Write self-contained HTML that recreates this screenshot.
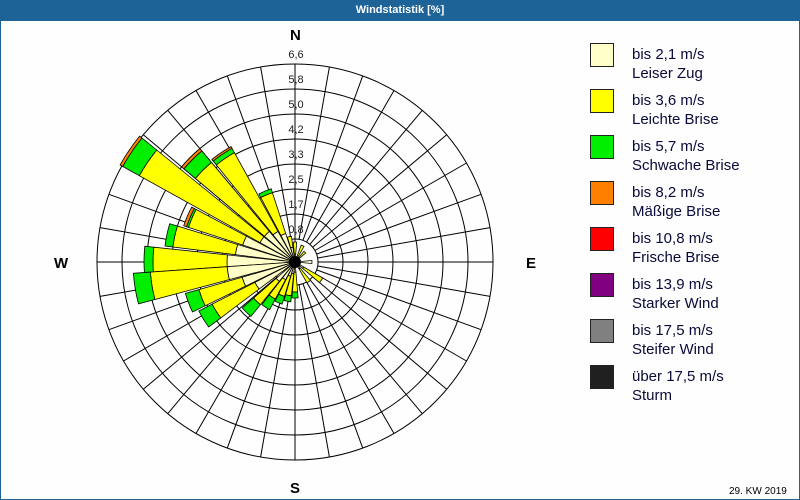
<!DOCTYPE html>
<html><head><meta charset="utf-8"><style>
body{margin:0;width:800px;height:500px;overflow:hidden;background:#fff;font-family:"Liberation Sans","DejaVu Sans",sans-serif}
#f{position:absolute;left:0;top:0;width:798px;height:498px;border:1px solid #1d6397;background:#fdfefd}
#h{position:absolute;left:0;top:0;width:800px;height:21px;background:#1d6397;color:#fff;font-size:11px;font-weight:bold;text-align:center;line-height:21px}
.lg{position:absolute;left:590px;width:22px;height:22px;border:1px solid #222}
.lt{position:absolute;left:632px;font-size:15px;line-height:19px;color:#0a0a3a}
.d{position:absolute;font-weight:bold;font-size:15px;color:#000}
</style></head><body>
<div id="f"></div>
<div id="h">Windstatistik [%]</div>
<svg id="s" width="800" height="500" style="position:absolute;left:0;top:0"></svg>
<div class="d" style="left:290px;top:27px">N</div>
<div class="d" style="left:526px;top:255px">E</div>
<div class="d" style="left:54px;top:255px">W</div>
<div class="d" style="left:290px;top:480px">S</div>
<div class="lg" style="top:43px;background:#ffffc8"></div><div class="lt" style="top:45px">bis 2,1 m/s<br>Leiser Zug</div>
<div class="lg" style="top:89px;background:#ffff00"></div><div class="lt" style="top:91px">bis 3,6 m/s<br>Leichte Brise</div>
<div class="lg" style="top:135px;background:#00ee00"></div><div class="lt" style="top:137px">bis 5,7 m/s<br>Schwache Brise</div>
<div class="lg" style="top:181px;background:#ff8000"></div><div class="lt" style="top:183px">bis 8,2 m/s<br>Mäßige Brise</div>
<div class="lg" style="top:227px;background:#ff0000"></div><div class="lt" style="top:229px">bis 10,8 m/s<br>Frische Brise</div>
<div class="lg" style="top:273px;background:#800080"></div><div class="lt" style="top:275px">bis 13,9 m/s<br>Starker Wind</div>
<div class="lg" style="top:319px;background:#808080"></div><div class="lt" style="top:321px">bis 17,5 m/s<br>Steifer Wind</div>
<div class="lg" style="top:365px;background:#202020"></div><div class="lt" style="top:367px">über 17,5 m/s<br>Sturm</div>
<div style="position:absolute;left:729px;top:486px;font-size:10px;color:#000">29. KW 2019</div>
<script>
var cx=295,cy=262,s='';
function P(b,r){b=b*Math.PI/180;return (cx+r*Math.sin(b)).toFixed(1)+','+(cy-r*Math.cos(b)).toFixed(1);}
function X(b,r){return P(b,r).split(',');}
for(var r=23;r<=200;r+=25)s+='<circle cx="'+cx+'" cy="'+cy+'" r="'+r+'" fill="none" stroke="#000" stroke-width="1"/>';
for(var i=0;i<36;i++){var b=i*10,a=X(b,23),c=X(b,198);s+='<line stroke="#000" stroke-width="1" x1="'+a[0]+'" y1="'+a[1]+'" x2="'+c[0]+'" y2="'+c[1]+'"/>';}
s+='<line x1="'+cx+'" y1="'+(cy-198)+'" x2="'+cx+'" y2="'+(cy+198)+'" stroke="#000"/>';
var cols=['#ffffc8','#ffff00','#00ee00','#ff8000'];
var D=[[277,287,60,123,131,0],[266,276,68,142,151,0],[255,266,68,145,162,0],[288,298,55,112,114,117],[299,309,40,178,197,200],[310,320,40,130,145,148],[321,331,35,125,130,132],[332,342,30,73,77,0],[343,352,15,26,0,0],[355,5,8,20,0,0],[20,30,5,18,0,0],[40,50,5,14,0,0],[85,95,17,0,0,0],[120,130,10,32,0,0],[140,150,8,24,0,0],[175,185,10,30,36,0],[186,196,12,34,40,0],[197,207,15,36,44,0],[208,218,20,42,54,0],[219,229,25,55,70,0],[233,243,45,93,108,0],[244,254,55,100,114,0]];
D.forEach(function(d){var a=d[0],e=d[1];if(e<a)e+=360;var prev=0;for(var k=0;k<4;k++){var r=d[2+k];if(!r)continue;
s+='<path d="M'+P(a,prev)+' L'+P(a,r)+' A'+r+','+r+' 0 0 1 '+P(e,r)+' L'+P(e,prev)+(prev?' A'+prev+','+prev+' 0 0 0 '+P(a,prev):'')+'Z" fill="'+cols[k]+'" stroke="#000" stroke-width="0.8"/>';prev=r;}});
s+='<circle cx="'+cx+'" cy="'+cy+'" r="6" fill="#000"/>';
var L=['0,8','1,7','2,5','3,3','4,2','5,0','5,8','6,6'];
for(var i=0;i<8;i++)s+='<text x="'+(cx+1)+'" y="'+(cy-25*(i+1)-4)+'" font-size="11" text-anchor="middle" fill="#222" font-family="Liberation Sans,sans-serif">'+L[i]+'</text>';
document.getElementById('s').innerHTML=s;
</script>
</body></html>
